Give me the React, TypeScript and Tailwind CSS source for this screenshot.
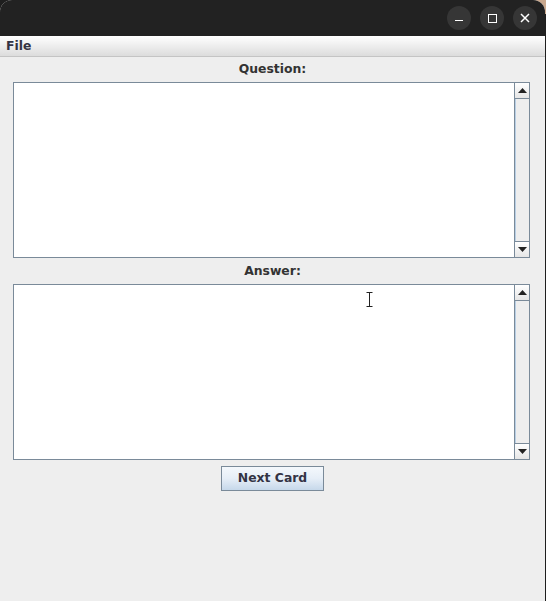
import React from "react";

const font = { fontFamily: '"DejaVu Sans", "Liberation Sans", sans-serif' };

function Arrow({ up }: { up: boolean }) {
  return (
    <svg width="9" height="5" viewBox="0 0 9 5">
      {up ? <polygon points="4.5,0 9,5 0,5" fill="#222" /> : <polygon points="0,0 9,0 4.5,5" fill="#222" />}
    </svg>
  );
}

function ScrollBar() {
  return (
    <div className="w-[15px] border-l border-[#7a8a99] flex flex-col bg-[#eeeeee]">
      <div className="h-[16px] flex items-center justify-center border-b border-[#7a8a99] bg-gradient-to-b from-white to-[#e6e6e6]">
        <Arrow up />
      </div>
      <div className="flex-1 border-l border-[#b8cfe5] bg-[#eeeeee]" />
      <div className="h-[16px] flex items-center justify-center border-t border-[#7a8a99] bg-gradient-to-b from-white to-[#e6e6e6]">
        <Arrow up={false} />
      </div>
    </div>
  );
}

function TextArea() {
  return (
    <div className="ml-[13px] w-[517px] h-[176px] border border-[#7a8a99] flex bg-white">
      <div className="flex-1 bg-white" />
      <ScrollBar />
    </div>
  );
}

export default function App() {
  return (
    <div className="relative w-[546px] h-[601px] bg-[#1e1e1e] overflow-hidden" style={font}>
      <div className="absolute right-0 top-0 w-[14px] h-[14px] bg-[#c9a88e]" />
      <div className="relative w-[545px] h-[601px] flex flex-col rounded-t-[12px] overflow-hidden bg-[#eeeeee]">
        {/* title bar */}
        <div className="h-[36px] bg-[#222222] flex items-center justify-end pr-[8px] gap-[9px]">
          <div className="w-[24px] h-[24px] rounded-full bg-[#363636] flex items-center justify-center">
            <div className="w-[8px] h-[1.5px] bg-white mt-[5px]" />
          </div>
          <div className="w-[24px] h-[24px] rounded-full bg-[#363636] flex items-center justify-center">
            <div className="w-[9px] h-[9px] border-[1.5px] border-white" />
          </div>
          <div className="w-[24px] h-[24px] rounded-full bg-[#363636] flex items-center justify-center">
            <svg width="10" height="10" viewBox="0 0 10 10">
              <path d="M1 1 L9 9 M9 1 L1 9" stroke="white" strokeWidth="1.5" />
            </svg>
          </div>
        </div>
        {/* menu bar */}
        <div className="h-[21px] bg-gradient-to-b from-white to-[#dcdcdc] border-b border-[#c4c4c4] flex items-center pl-[6px]">
          <span className="text-[12.4px] font-bold text-[#333344] leading-none">File</span>
        </div>
        {/* content */}
        <div className="flex flex-col">
          <div className="h-[25px] flex items-center justify-center text-[12.4px] font-bold text-[#333333]">Question:</div>
          <TextArea />
          <div className="h-[26px] flex items-center justify-center text-[12.4px] font-bold text-[#333333]">Answer:</div>
          <TextArea />
          <div className="mt-[6px] flex justify-center">
            <div className="w-[103px] h-[25px] border border-[#7a8a99] bg-gradient-to-b from-[#f4f8fc] via-[#e6eef7] to-[#c6d8ea] flex items-center justify-center text-[12.4px] font-bold text-[#333344]">
              Next Card
            </div>
          </div>
        </div>
        {/* mouse cursor */}
        <svg className="absolute left-[365px] top-[291px]" width="9" height="18" viewBox="0 0 9 18">
          <path d="M1 1 H8 M4.5 1 V16 M1 16 H8" stroke="white" strokeWidth="3" fill="none" />
          <path d="M1.5 1.5 H7.5 M4.5 1.5 V15.5 M1.5 15.5 H7.5" stroke="#222" strokeWidth="1" fill="none" />
        </svg>
      </div>
    </div>
  );
}
